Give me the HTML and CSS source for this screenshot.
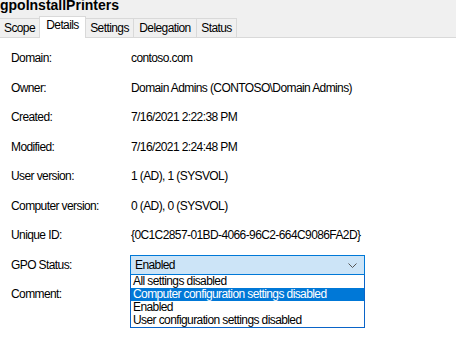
FILE: index.html
```html
<!DOCTYPE html>
<html lang="en">
<head>
    <meta charset="UTF-8">
    <title>gpoInstallPrinters</title>
    <link rel="stylesheet" href="styles.css">
</head>
<body>
    <div class="header">
        <div class="title">gpoInstallPrinters</div>
        <div class="tabs">
            <div class="tab tab-scope">Scope</div>
            <div class="tab tab-details active">Details</div>
            <div class="tab tab-settings">Settings</div>
            <div class="tab tab-delegation">Delegation</div>
            <div class="tab tab-status">Status</div>
        </div>
    </div>

    <!-- Details tab -->
    <div class="details">
        <div class="label">Domain:</div>
        <div class="value">contoso.com</div>

        <div class="label">Owner:</div>
        <div class="value">Domain Admins (CONTOSO\Domain Admins)</div>

        <div class="label">Created:</div>
        <div class="value">7/16/2021 2:22:38 PM</div>

        <div class="label">Modified:</div>
        <div class="value">7/16/2021 2:24:48 PM</div>

        <div class="label">User version:</div>
        <div class="value">1 (AD), 1 (SYSVOL)</div>

        <div class="label">Computer version:</div>
        <div class="value">0 (AD), 0 (SYSVOL)</div>

        <div class="label">Unique ID:</div>
        <div class="value">{0C1C2857-01BD-4066-96C2-664C9086FA2D}</div>

        <div class="label">GPO Status:</div>
        <div class="value">
            <div class="combo">
                <span>Enabled</span>
                <svg class="chevron" width="9" height="5" viewBox="0 0 9 5">
                    <path d="M0.5 0.5 L4.5 4.5 L8.5 0.5" fill="none" stroke="#555" stroke-width="1"/>
                </svg>
                <ul class="combo-list">
                    <li>All settings disabled</li>
                    <li class="selected">Computer configuration settings disabled</li>
                    <li>Enabled</li>
                    <li>User configuration settings disabled</li>
                </ul>
            </div>
        </div>

        <div class="label">Comment:</div>
        <div class="value"></div>
    </div>
</body>
</html>
```

FILE: styles.css
```css
body {
    margin: 0;
    font-family: "Liberation Sans", Arial, sans-serif;
    font-size: 12px;
    letter-spacing: -0.6px;
    color: #000000;
    background-color: #ffffff;
}
.header {
    display: flex;
    flex-direction: column;
    background-color: #f0f0f0;
    height: 37px;
    border-bottom: 1px solid #d9d9d9;
}
.title {
    font-size: 14px;
    font-weight: bold;
    letter-spacing: 0;
    line-height: 16px;
    height: 16px;
    margin-top: -3px;
    white-space: nowrap;
}
.tabs {
    display: flex;
    align-items: flex-end;
    height: 21px;
    margin-top: 3px;
}
.tab {
    box-sizing: border-box;
    height: 19px;
    line-height: 18px;
    text-align: center;
    border: 1px solid #d9d9d9;
    border-bottom: none;
    margin-left: -1px;
    background-color: #f0f0f0;
}
.tab.active {
    height: 22px;
    line-height: 17px;
    background-color: #ffffff;
    margin-bottom: -1px;
}
.tab-scope { width: 41px; }
.tab-details { width: 47px; }
.tab-settings { width: 49px; }
.tab-delegation { width: 64px; }
.tab-status { width: 41px; }
.details {
    display: grid;
    grid-template-columns: 120px 1fr;
    grid-auto-rows: 29.5px;
    padding: 6px 0 40px 11px;
}
.label,
.value {
    line-height: 29.5px;
    white-space: nowrap;
}
.combo {
    position: relative;
    box-sizing: border-box;
    width: 235px;
    height: 20px;
    margin: 4px 0 0 -1px;
    padding-left: 4px;
    line-height: 18px;
    border: 1px solid #0078d7;
    background-color: #cce4f7;
}
.chevron {
    position: absolute;
    right: 7px;
    top: 7px;
}
.combo-list {
    position: absolute;
    left: -1px;
    top: 19px;
    width: 235px;
    box-sizing: border-box;
    margin: 0;
    padding: 0;
    list-style-type: none;
    background-color: #ffffff;
    border: 1px solid #0a64c8;
    border-top: none;
}
.combo-list li {
    height: 13px;
    line-height: 13px;
    padding-left: 2px;
}
.combo-list li.selected {
    background-color: #0078d7;
    color: #ffffff;
}
```
